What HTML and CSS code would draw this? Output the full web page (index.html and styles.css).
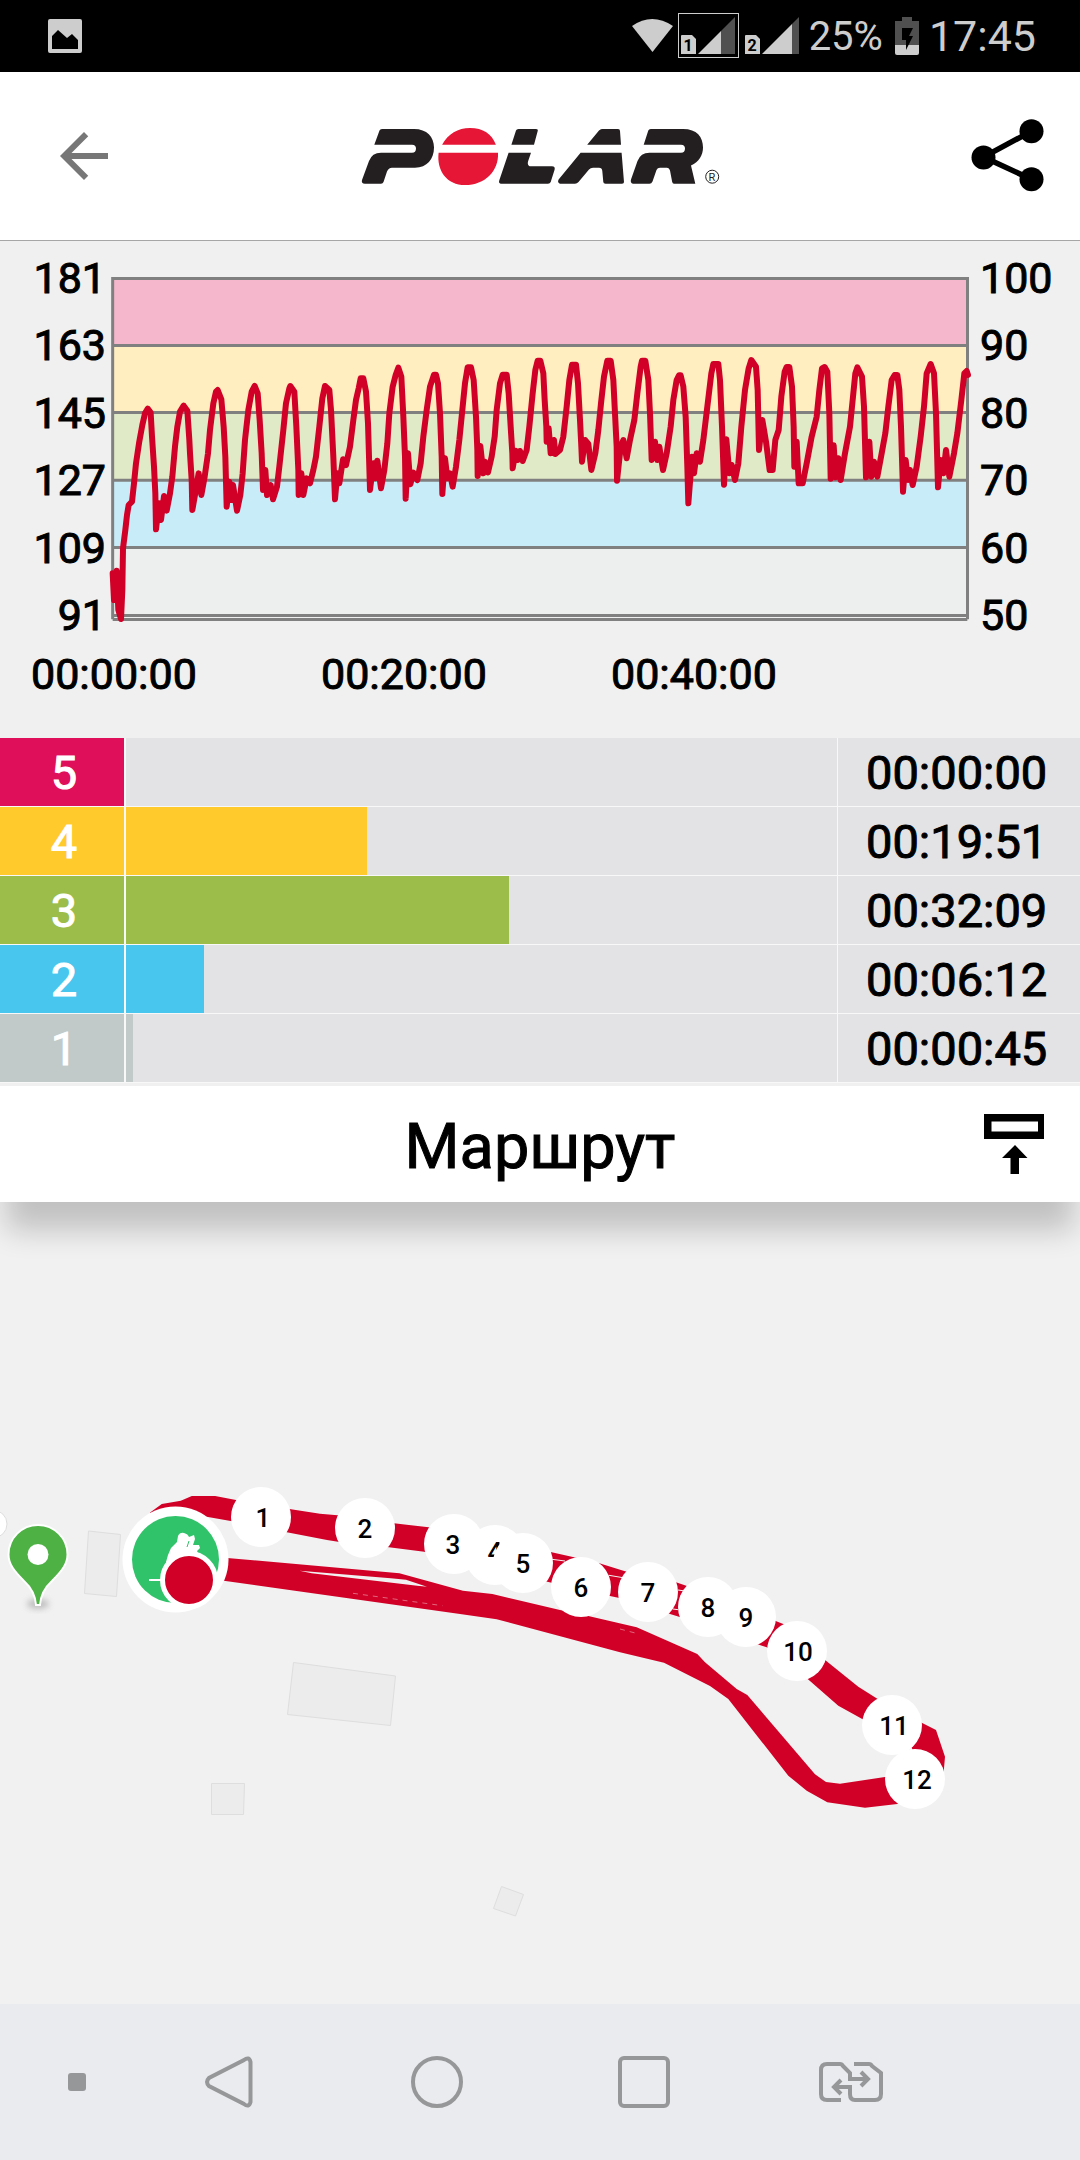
FILE: index.html
```html
<!DOCTYPE html>
<html lang="ru">
<head>
<meta charset="utf-8">
<meta name="viewport" content="width=device-width, initial-scale=1">
<title>Polar</title>
<link rel="stylesheet" href="styles.css">
</head>
<body>
<div class="status">
  <svg class="status-photo" width="34" height="34" viewBox="0 0 34 34" aria-hidden="true"><path fill="#cdcdcd" fill-rule="evenodd" d="M2 0H32Q34 0 34 2V32Q34 34 32 34H2Q0 34 0 32V2Q0 0 2 0ZM4 17V30H30V21L24 15L19 19L10 11Z"/></svg>
  <svg width="168" height="46" viewBox="632 13 168 46" aria-hidden="true">
    <path fill="#cdcdcd" d="M632 26Q652 12 673 26L652.500 52Z"/>
    <rect x="678.500" y="13.500" width="60" height="44" fill="none" stroke="#cdcdcd"/>
    <path fill="#505050" d="M721 31L735 17V54H721Z"/><path fill="#cdcdcd" d="M698 54L721 31V54Z"/>
    <path fill="#505050" d="M792 24L799 17V54H792Z"/><path fill="#cdcdcd" d="M762 54L792 24V54Z"/>
    <path fill="#cdcdcd" d="M681 36Q681 35 682 35H692L696 39V54H681ZM745 36Q745 35 746 35H756L760 39V54H745Z"/>
    <text class="sim" x="688" y="51">1</text><text class="sim" x="752" y="51">2</text>
  </svg>
  <span class="percent">25%</span>
  <svg width="24" height="38" viewBox="0 0 24 38" aria-hidden="true"><path fill="#505050" d="M7 0H17V4H24V28H0V4H7Z"/><path fill="#cdcdcd" d="M0 28H24V36Q24 38 22 38H2Q0 38 0 36Z"/><path d="M7 11H18L14 19H18L11 33V23H7Z"/></svg>
  <span class="clock">17:45</span>
</div>

<header class="topbar">
  <button class="icon-button" aria-label="Назад"><svg width="72" height="72" viewBox="0 0 24 24"><path fill="#777" d="M20 11H7.830L13.420 5.410L12 4L4 12L12 20L13.410 18.590L7.830 13H20Z"/></svg></button>
  <svg class="logo" width="362" height="62" viewBox="360 124 362 62" role="img" aria-label="Polar">
    <g fill="#231f20">
      <path d="M374.300 143.700L379.500 129.500Q380 128 382 128H414C427 128 434 136 434 146.500C434 158 427 166.700 415 166.700H392Q388.500 166.700 387 170.500L383.500 181Q382.900 182.700 381 182.700H365Q361 182.700 362 179L369 160Q372 151.700 381 151.700H412Q416 151.700 416 147.500Q416 143.700 412 143.700Z"/>
      <path d="M511.400 143.700L516 129.500Q516.500 128 518.500 128H536Q538.300 128 537.700 130L534 143.700Z"/>
      <path d="M508.600 151.700H531L528 160.500Q527 165.300 531 165.300H552Q555.500 165.300 554.500 169L550.700 181Q550 182.700 548 182.700H502Q498 182.700 499.400 179Z"/>
      <path d="M587.200 143.700L599 129.500Q600.300 128 602 128H618Q620 128 620 130L621 143.700Z"/>
      <path d="M580.600 151.700H621.600L624 181Q624 182.700 622 182.700H605.500Q603.500 182.700 603.300 181L602.300 170Q602 166.700 599 166.700H593Q590.500 166.700 589 168.500L578.500 181Q577 182.700 575 182.700H560Q557 181.500 558.600 178.500Z"/>
      <path d="M643.700 143.700L648.300 129.500Q648.800 128 650.800 128H683C697 128 703 136 703 146.500C703 154 699 161 691 164.500L695.300 182.700H674Q672.600 182.700 672.200 181L670 169.500Q669.400 166.700 667 166.700H660Q657.500 166.700 656.500 169L652.500 180.500Q651.500 182.700 649.500 182.700H633Q630 182 631 178.500L637.500 160Q640.500 151.700 649.500 151.700H681Q685 151.700 685 147.500Q685 143.700 681 143.700Z"/>
    </g>
    <path fill="#e61636" d="M442.100 143.700C448 133 458 127 470 127C483 127 492 133 495.900 143.700ZM438.600 151.700H498C499 170 485 184 465 184C447 184 436.500 170 438.600 151.700Z"/>
    <circle cx="712.200" cy="175.700" r="6.500" fill="none" stroke="#231f20"/>
    <text class="reg" x="712" y="180">R</text>
  </svg>
  <button class="icon-button" aria-label="Поделиться"><svg width="74" height="74" viewBox="970 119 74 74"><path d="M1031.400 131.300L983.500 157L1031.400 179.300" fill="none" stroke="#000" stroke-width="5.500"/><circle cx="1031.500" cy="131.300" r="12"/><circle cx="983.500" cy="157.500" r="12"/><circle cx="1031.500" cy="179.300" r="12"/></svg></button>
</header>

<main class="content">
  <section class="chart" aria-label="Пульс">
    <div class="plot">
      <div class="axis axis-bpm"><span>181</span><span>163</span><span>145</span><span>127</span><span>109</span><span>91</span></div>
      <svg class="trace" viewBox="324 90 2592 1062" aria-hidden="true">
        <path fill="#f5b7cc" d="M338 115H2902V316H338Z"/>
        <path fill="#feeec0" d="M338 316H2902V517H338Z"/>
        <path fill="#e0eac7" d="M338 517H2902V720H338Z"/>
        <path fill="#c8edf9" d="M338 720H2902V922H338Z"/>
        <path fill="#edefee" d="M338 922H2902V1132H338Z"/>
        <path fill="none" stroke="#808080" stroke-width="9" d="M338 1138V115.500H2902.500V1138M338 316.500H2902M338 517.500H2902M338 720.500H2902M338 922.500H2902M338 1126.500H2902M338 1138.500H2902"/>
        <polyline fill="none" stroke="#d10027" stroke-width="18" stroke-linejoin="round" stroke-linecap="round" points="338,1000 342,1080 350,992 355,1110 363,1137 367,1050 369,925 376,870 381,825 386,795 396,785 402,730 408,670 417,610 427,555 435,520 443,506 452,518 456,590 462,680 466,760 468,868 477,790 483,840 492,768 500,812 510,760 517,710 525,620 532,560 540,515 551,497 562,512 568,600 570,640 575,720 577,810 584,770 596,700 604,765 614,710 624,640 630,570 640,490 648,455 653,450 664,478 671,560 676,650 680,800 688,725 696,780 699,735 711,812 721,765 728,700 735,600 745,510 755,455 764,438 773,460 779,540 785,640 789,750 796,690 801,765 812,735 819,778 831,740 838,680 850,570 858,490 868,445 871,438 883,455 889,560 895,690 896,765 904,700 910,765 920,715 930,730 940,690 948,650 958,560 967,475 975,438 988,450 993,510 1000,650 1005,778 1012,700 1018,730 1029,658 1038,675 1050,620 1060,540 1068,480 1076,445 1082,415 1090,415 1098,455 1104,550 1110,750 1120,670 1126,715 1132,662 1143,745 1153,690 1162,610 1168,520 1178,440 1187,405 1195,383 1204,410 1210,530 1215,650 1217,776 1224,640 1231,733 1240,698 1252,720 1262,670 1270,590 1280,510 1290,440 1302,404 1308,404 1314,430 1320,520 1325,650 1327,762 1335,655 1342,715 1350,700 1358,740 1368,680 1378,600 1388,500 1395,430 1403,382 1413,382 1421,420 1428,530 1432,630 1433,708 1441,618 1450,700 1455,665 1464,697 1475,650 1484,590 1490,510 1500,430 1508,404 1520,404 1526,460 1532,560 1537,640 1538,685 1547,632 1553,660 1560,633 1568,663 1580,630 1588,560 1598,460 1606,390 1613,362 1621,362 1630,400 1634,480 1639,560 1640,605 1646,565 1652,640 1662,600 1666,642 1680,630 1690,590 1700,500 1708,420 1716,374 1728,374 1734,430 1740,540 1744,620 1746,665 1755,600 1765,612 1774,690 1786,640 1795,570 1803,490 1812,410 1822,362 1832,362 1840,420 1845,520 1850,620 1851,722 1862,620 1870,600 1880,655 1890,600 1903,540 1912,460 1922,380 1926,362 1936,362 1945,420 1950,520 1955,660 1965,605 1972,660 1978,620 1989,690 2000,640 2012,560 2020,480 2030,420 2037,406 2042,406 2050,440 2057,530 2062,680 2065,790 2076,650 2082,700 2090,640 2100,665 2110,600 2122,500 2134,400 2140,372 2155,372 2160,420 2166,560 2172,734 2179,598 2188,700 2195,675 2205,720 2215,670 2224,560 2235,450 2246,385 2254,360 2268,380 2273,450 2277,630 2287,540 2298,605 2309,690 2318,690 2326,600 2336,570 2344,470 2354,395 2360,381 2368,381 2376,440 2381,560 2383,680 2390,605 2396,730 2408,730 2420,670 2435,590 2450,530 2458,450 2466,385 2474,381 2482,395 2488,520 2492,716 2501,616 2507,712 2515,655 2522,720 2535,640 2550,560 2558,480 2566,400 2572,382 2586,410 2592,500 2598,712 2608,605 2614,710 2622,665 2632,710 2645,640 2656,580 2665,500 2675,420 2684,405 2692,405 2698,450 2703,560 2709,755 2717,660 2724,720 2730,690 2738,735 2750,680 2762,590 2772,500 2780,400 2792,372 2802,400 2808,520 2814,742 2822,660 2830,700 2838,630 2848,710 2862,640 2872,580 2884,480 2893,400 2900,393 2904,405"/>
      </svg>
      <div class="axis axis-percent"><span>100</span><span>90</span><span>80</span><span>70</span><span>60</span><span>50</span></div>
    </div>
    <div class="ticks"><span>00:00:00</span><span>00:20:00</span><span>00:40:00</span></div>
  </section>

  <table class="zones" aria-label="Зоны пульса">
    <tr class="zone-5"><th scope="row">5</th><td class="track"><div class="bar" style="width:0%"></div></td><td class="time">00:00:00</td></tr>
    <tr class="zone-4"><th scope="row">4</th><td class="track"><div class="bar" style="width:33.9%"></div></td><td class="time">00:19:51</td></tr>
    <tr class="zone-3"><th scope="row">3</th><td class="track"><div class="bar" style="width:53.9%"></div></td><td class="time">00:32:09</td></tr>
    <tr class="zone-2"><th scope="row">2</th><td class="track"><div class="bar" style="width:11%"></div></td><td class="time">00:06:12</td></tr>
    <tr class="zone-1"><th scope="row">1</th><td class="track"><div class="bar" style="width:1%"></div></td><td class="time">00:00:45</td></tr>
  </table>

  <div class="route-header">
    <h2>Маршрут</h2>
    <button class="collapse" aria-label="Свернуть"><svg width="60" height="60" viewBox="0 0 60 60"><path fill-rule="evenodd" d="M0 0H60V25H0ZM7.500 7.500V17.500H54V7.500ZM31 31L43.500 44H35V60H26.500V44H18Z"/></svg></button>
  </div>

  <svg class="map" viewBox="0 1202 1080 802" preserveAspectRatio="xMidYMid slice" role="img" aria-label="Карта маршрута">
    <defs><filter id="soft" x="-50%" y="-50%" width="200%" height="200%"><feGaussianBlur stdDeviation="3"/></filter></defs>
    <g fill="#ececec" stroke="#dedede">
      <path d="M88.500 1531L120.500 1534.500L116.500 1596.500L84.500 1593.500Z"/>
      <path d="M293.500 1662.500L395.500 1676L390.500 1725.500L287.500 1714.500Z"/>
      <path d="M211.500 1783.500H244.500L243.500 1814.500H211.500Z"/>
      <path d="M501.500 1886.500L523.500 1894.500L515.500 1916L493.500 1908.500Z"/>
    </g>
    <circle cx="-7" cy="1524" r="14" fill="#fff" stroke="#ddd"/>
    <path fill="#d10027" d="M149.800 1512.700L161.800 1504L180.800 1500.700L191.800 1496H215.200L236 1500L291 1509.300L320 1513.700L337.500 1515.300L394 1523.300L428.700 1527.300L500 1541L551.700 1552.300L574 1557.300L599.300 1563.300L625 1571.300L676 1582.300L687 1586L775 1620.700L783.300 1624L826 1660.700L858.300 1686.700L877.300 1698.700L921.700 1722.700L936 1730L945 1756.700L943.700 1771.700L930 1795L897.300 1804L865 1807.700L827.300 1802.300L806.700 1790.700L788.300 1775.700L728.300 1699L710 1686L664 1662.700L620 1652.300L496.700 1619.300L460 1614L223.800 1580.700L190 1577L200 1556L227.300 1558L399.400 1573.300L463 1590.700L492.400 1594L560 1610L588.300 1616L636.700 1627.300L697.300 1654L705 1662.300L736.700 1689L747.300 1695L755 1704L815 1774.300L826 1782L840 1783.700L885 1777L920 1775L911.700 1747.300L862.700 1719.300L838.300 1705.700L807.700 1679L766.700 1647.300L757.700 1644.300L679 1616.700L670 1614L618.300 1597.700L610 1596L547.300 1581.700L424.200 1551.700L389 1547.300L338 1541.700L327 1540L286.800 1532.300L230.700 1521L206.600 1516.700L170 1530Z"/>
    <path fill="#f1f1f1" d="M299.600 1570.700L390.800 1578.300L406 1579.700L427 1586.700L413 1585.300L311.600 1573.300Z"/>
    <path fill="none" stroke="#f1f1f1" d="M552 1559.300L565 1561M609 1575.300L623 1577.700M678 1590L683 1590.700M673 1609L678 1609.700"/>
    <path fill="none" stroke="#e2667d" stroke-dasharray="5 5" d="M353 1593.300L442.500 1605.700M620 1629L637 1633.500"/>
    <circle cx="175.500" cy="1559.500" r="53" fill="#fff"/>
    <circle cx="175.500" cy="1559.500" r="43.500" fill="#30c36a"/>
    <path fill="#fff" d="M166 1562L168 1555L171 1548L177 1542L178 1536Q180 1532 184 1533Q188 1534 189 1537L194 1535L195 1539L193 1545L199 1545L200 1548L197 1551L204 1566H170Z"/>
    <path stroke="#30c36a" d="M189 1541L187 1547"/>
    <path stroke="#fff" stroke-width="2" d="M149 1580H162"/>
    <circle cx="189" cy="1580" r="26.500" fill="#d10027" stroke="#fff" stroke-width="5"/>
    <ellipse cx="38" cy="1604" rx="11" ry="5" fill="#999" opacity=".6" filter="url(#soft)"/>
    <path fill="#4db144" stroke="#fff" stroke-width="2" d="M36 1605Q35 1591 24 1581C14 1571 8.500 1564 8.500 1554.500A29.500 29.500 0 0 1 67.500 1554.500C67.500 1564 62 1571 52 1581Q41 1591 40 1605Z"/>
    <circle cx="38" cy="1554.500" r="10.500" fill="#fff"/>
    <g class="marks">
      <g><circle cx="261" cy="1517" r="30"/><text x="263" y="1527">1</text></g>
      <g><circle cx="365" cy="1528" r="30"/><text x="365" y="1538">2</text></g>
      <g><circle cx="454" cy="1544" r="30"/><text x="453" y="1554">3</text></g>
      <g><circle cx="495" cy="1555" r="30"/><text x="495" y="1561">4</text></g>
      <g><circle cx="523" cy="1563" r="30"/><text x="523" y="1573">5</text></g>
      <g><circle cx="581" cy="1587" r="30"/><text x="581" y="1597">6</text></g>
      <g><circle cx="648" cy="1592" r="30"/><text x="648" y="1602">7</text></g>
      <g><circle cx="708" cy="1607" r="30"/><text x="708" y="1617">8</text></g>
      <g><circle cx="746" cy="1617" r="30"/><text x="746" y="1627">9</text></g>
      <g><circle cx="797" cy="1651" r="30"/><text x="798" y="1661">10</text></g>
      <g><circle cx="892" cy="1725" r="30"/><text x="894" y="1735">11</text></g>
      <g><circle cx="915" cy="1779" r="30"/><text x="917" y="1789">12</text></g>
    </g>
  </svg>
</main>

<nav class="navbar" aria-label="Система">
  <button class="nav-dot" aria-label="Скрыть панель"><svg width="18" height="18"><rect width="18" height="18" rx="3" fill="#969798"/></svg></button>
  <button aria-label="Назад"><svg width="54" height="54" viewBox="0 0 54 54"><path d="M41 5Q46 1 47.500 7V47Q46 53 41 49L6 31Q2 27 6 23Z"/></svg></button>
  <button aria-label="Домой"><svg width="54" height="54" viewBox="0 0 54 54"><circle cx="27" cy="27" r="24"/></svg></button>
  <button aria-label="Недавние"><svg width="54" height="54" viewBox="0 0 54 54"><rect x="3" y="3" width="48" height="48" rx="4"/></svg></button>
  <button aria-label="Сменить SIM"><svg width="64" height="42" viewBox="0 0 64 42"><path d="M22 39H8Q2 39 2 33V9Q2 3 8 3H21Q23 3 24 5L31 12V18H48M42 11L49 18L42 25M35 3H50Q52 3 53 5L62 12V33Q62 39 56 39H36Q31 39 31 33V26H15M22 19L15 26L22 33"/></svg></button>
</nav>
</body>
</html>
```
FILE: styles.css
```css
* { box-sizing: border-box; }
body {
  margin: 0;
  min-height: 100vh;
  display: flex;
  flex-direction: column;
  background: #f0f0f0;
  color: #000;
  font-family: Roboto, "Noto Sans", sans-serif;
}
button {
  border: 0;
  padding: 0;
  background: none;
  display: flex;
  align-items: center;
  justify-content: center;
}
svg { display: block; }

.status {
  height: 72px;
  padding: 0 44px 0 48px;
  display: flex;
  align-items: center;
  background: #000;
  color: #cdcdcd;
}
.status-photo { margin-right: auto; }
.percent { margin: 0 12px 0 9px; font-size: 40px; }
.clock { margin-left: 10px; font-size: 43px; }
.sim { font-size: 16px; font-weight: 700; text-anchor: middle; }

.topbar {
  height: 169px;
  padding: 0 36px 0 48px;
  display: flex;
  align-items: center;
  justify-content: space-between;
  background: #fff;
  border-bottom: 1px solid #a6a6a6;
}
.logo { margin-right: 8px; }
.reg { font-size: 11px; text-anchor: middle; fill: #231f20; }

.content { flex: 1; display: flex; flex-direction: column; }

.chart {
  padding: 16px 0 43px;
  font-size: 43px;
  line-height: 42px;
  -webkit-text-stroke: 1px currentColor;
}
.plot { display: grid; grid-template-columns: 108px 1fr 108px; }
.axis { display: flex; flex-direction: column; justify-content: space-between; }
.axis-bpm { align-items: flex-end; padding-right: 2px; }
.axis-percent { padding-left: 8px; }
.trace { width: 100%; margin: 13px 0 12px; }
.ticks {
  display: grid;
  grid-template-columns: repeat(3, 290px);
  margin-top: 17px;
  padding-left: 31px;
}

.zones { width: 100%; table-layout: fixed; border-spacing: 0; }
.zones th, .zones td {
  height: 69px;
  padding: 0;
  border-bottom: 1px solid #f8f8f8;
  line-height: 60px;
  font-size: 47px;
  font-weight: 400;
  -webkit-text-stroke: 1px currentColor;
}
.zones th {
  width: 126px;
  padding-left: 4px;
  border-right: 2px solid #f8f8f8;
  color: #fff;
  background: var(--zone);
}
.zones td { background: #e3e3e5; }
.bar { height: 68px; background: var(--zone); }
.zones .time { width: 243px; padding-left: 28px; border-left: 1px solid #f8f8f8; }
.zones th, .zones .time { padding-top: 2px; }
.zone-5 { --zone: #e00f5a; }
.zone-4 { --zone: #ffca2c; }
.zone-3 { --zone: #9dbd4b; }
.zone-2 { --zone: #48c6ee; }
.zone-1 { --zone: #c1cac8; }

.route-header {
  position: relative;
  margin-top: 3px;
  height: 116px;
  padding: 0 36px;
  display: grid;
  grid-template-columns: 60px 1fr 60px;
  align-items: center;
  background: #fff;
  box-shadow: 0 34px 28px -6px rgba(0, 0, 0, 0.2);
}
.route-header h2 {
  grid-column: 2;
  margin: 0;
  padding-top: 4px;
  text-align: center;
  font-size: 63px;
  font-weight: 400;
  -webkit-text-stroke: 1px currentColor;
}

.map { flex: 1; width: 100%; min-height: 400px; background: #f1f1f1; }
.marks circle { fill: #fff; }
.marks text {
  font-size: 26px;
  font-weight: 500;
  text-anchor: middle;
  -webkit-text-stroke: 1px currentColor;
}

.navbar {
  height: 156px;
  display: grid;
  grid-template-columns: 126px repeat(4, 1fr) 126px;
  align-items: center;
  background: #e9ebee;
}
.navbar path, .navbar circle, .navbar button:not(.nav-dot) rect {
  fill: none;
  stroke: #969798;
  stroke-width: 4;
}
.nav-dot { padding-left: 28px; }
```
